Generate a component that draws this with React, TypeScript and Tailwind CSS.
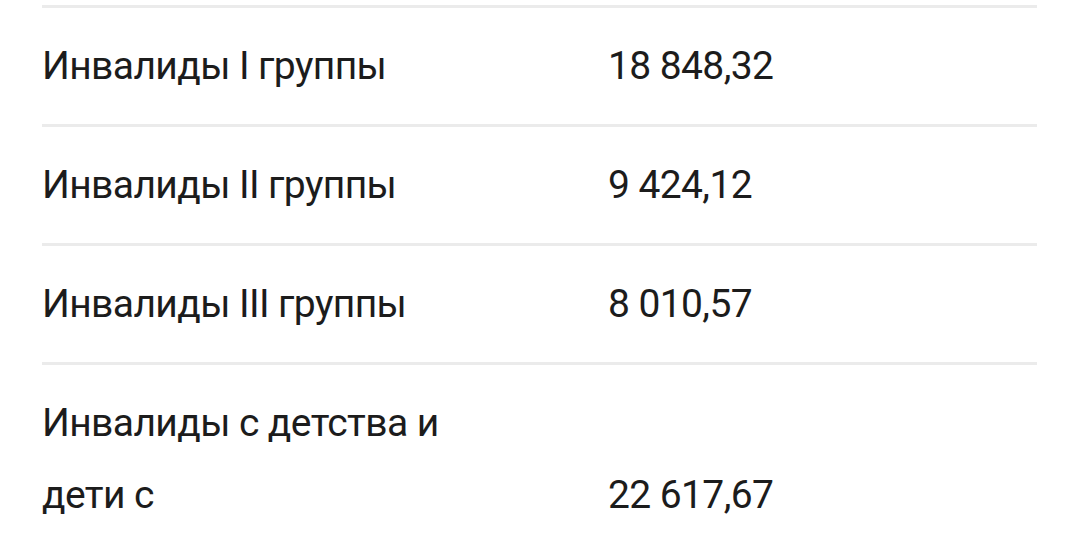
import React from "react";

const rows = [
  { label: "Инвалиды I группы", value: "18 848,32" },
  { label: "Инвалиды II группы", value: "9 424,12" },
  { label: "Инвалиды III группы", value: "8 010,57" },
  { label: "Инвалиды с детства и дети с", value: "22 617,67" },
];

export default function App() {
  return (
    <div
      className="w-[1080px] h-[540px] overflow-hidden bg-white text-[#1c1c1c]"
      style={{ fontFamily: 'Roboto, sans-serif' }}
    >
      <div className="mx-[42px] w-[995px] pt-[5px]">
        {rows.map((r) => (
          <div key={r.label} className="flex items-end border-t-[3px] border-[#ebebeb] py-[22px] text-[39px] leading-[72px] tracking-[-0.6px]">
            <div className="w-[566px] pr-[120px]">{r.label}</div>
            <div>{r.value}</div>
          </div>
        ))}
      </div>
    </div>
  );
}
